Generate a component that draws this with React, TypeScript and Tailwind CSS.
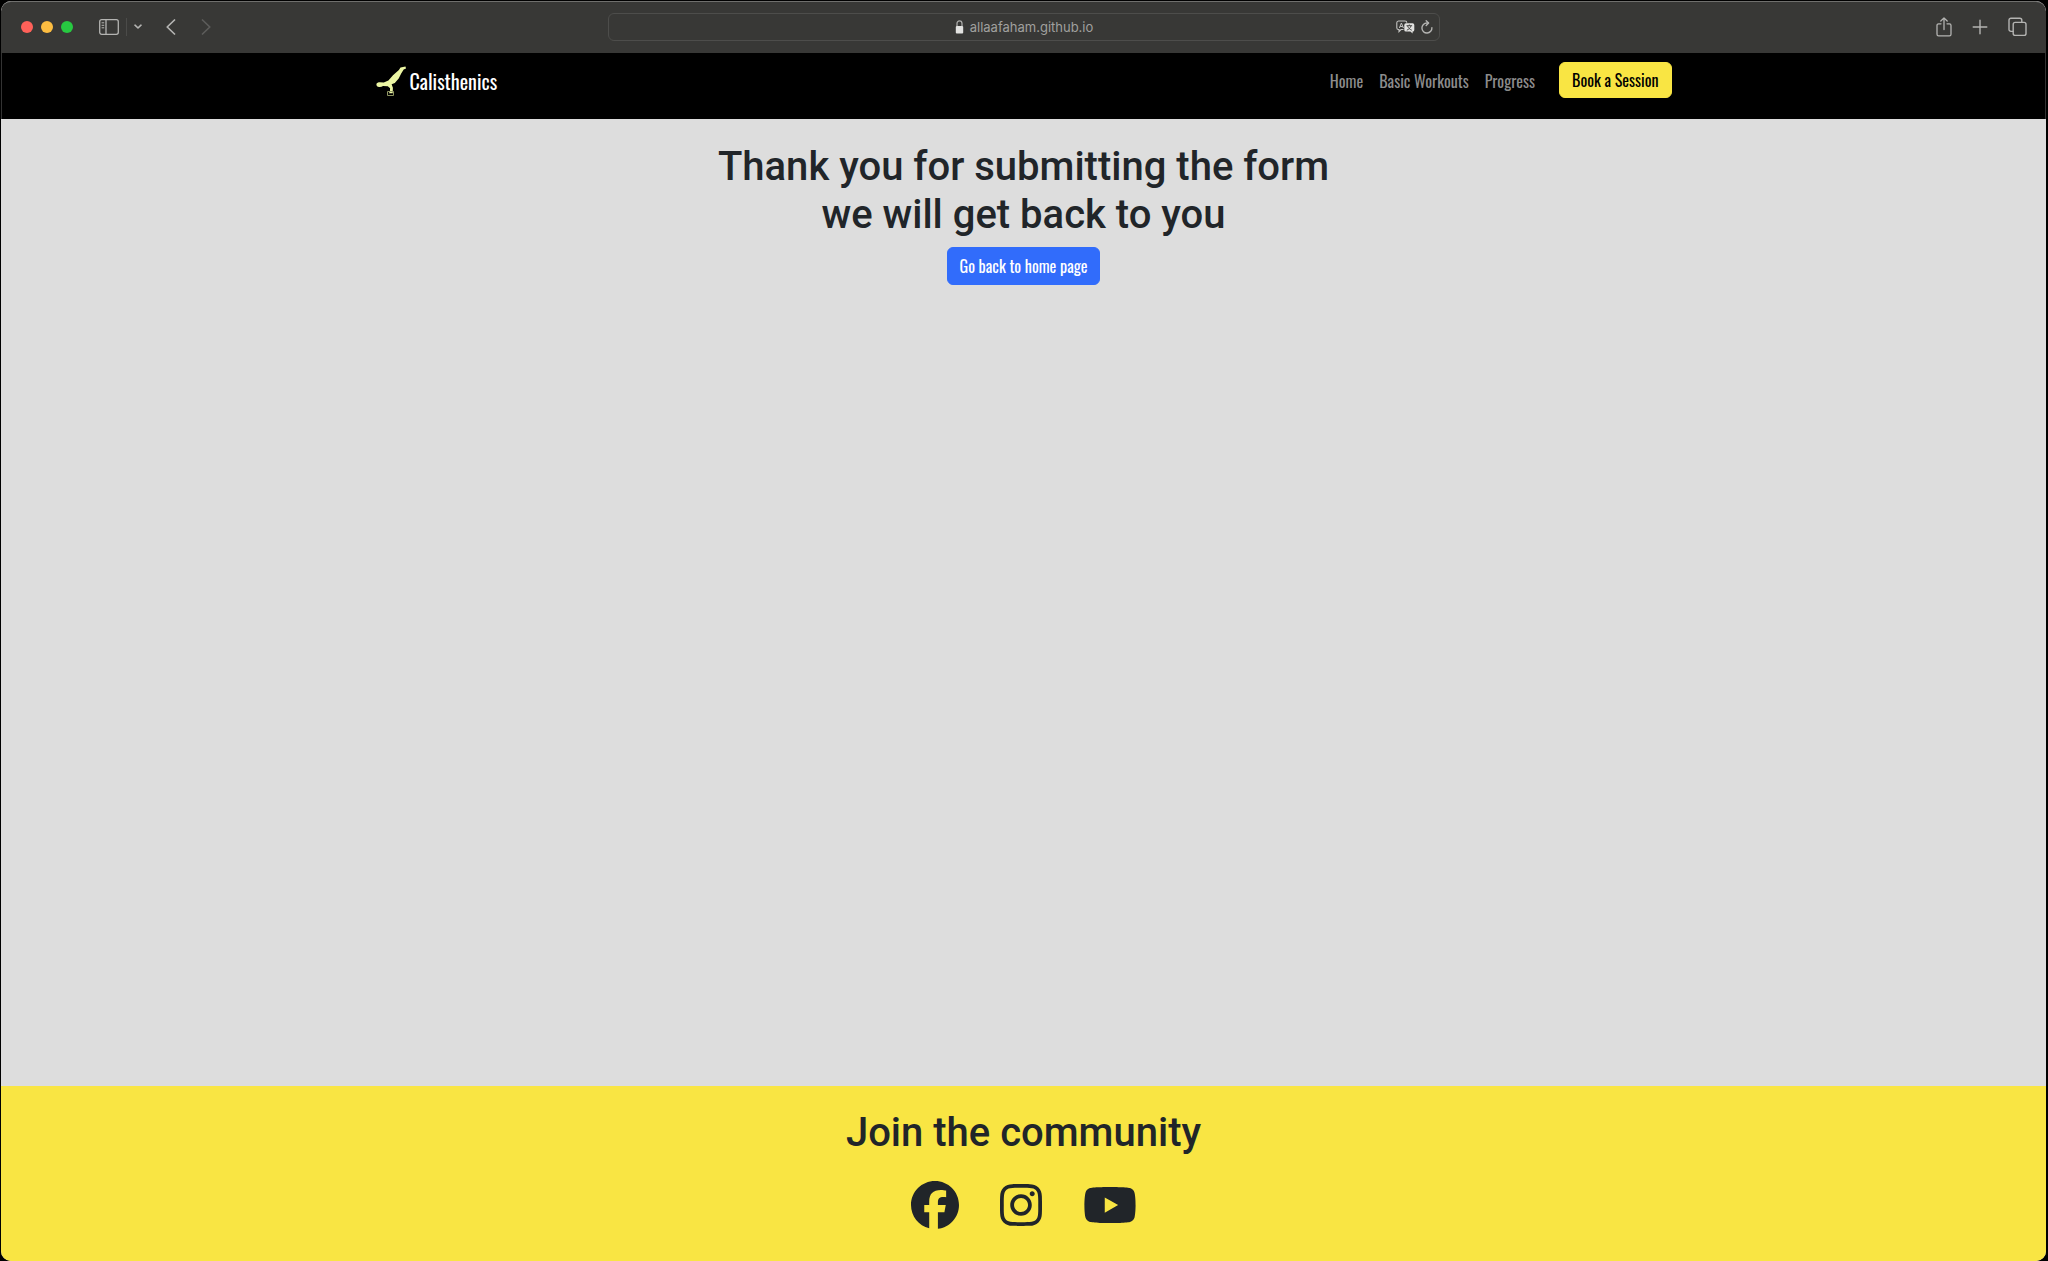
import React from "react";
import { FaFacebook, FaInstagram, FaYoutube } from "react-icons/fa6";

const navLinks = ["Home", "Basic Workouts", "Progress"];

const iconProps = {
  fill: "none",
  stroke: "currentColor",
  strokeLinecap: "round" as const,
  strokeLinejoin: "round" as const,
};

function Toolbar() {
  return (
    <div className="flex h-[52px] items-center rounded-t-[10px] border-t border-[#6f6f6d] bg-[#383836] pb-[2px] text-[#b4b4b2]">
      <div className="flex flex-1 items-center pl-[20px]">
        <div className="flex gap-2">
          <button aria-label="Close" className="size-3 rounded-full bg-[#ff6159]" />
          <button aria-label="Minimize" className="size-3 rounded-full bg-[#fdbd41]" />
          <button aria-label="Zoom" className="size-3 rounded-full bg-[#27c941]" />
        </div>
        <button aria-label="Show sidebar" className="ml-[26px]">
          <svg width="20" height="16" viewBox="0 0 20 16" {...iconProps} strokeWidth="1.3">
            <rect x="0.7" y="0.7" width="18.6" height="14.6" rx="2" />
            <path d="M7 1v14" />
            <path d="M3 3.8h1.8M3 6.3h1.8M3 8.8h1.8" strokeWidth="1" />
          </svg>
        </button>
        <span className="ml-[7px] h-[18px] w-px bg-[#4b4b49]" />
        <button aria-label="Tab groups" className="ml-[7px]">
          <svg width="8" height="6" viewBox="0 0 8 6" {...iconProps} strokeWidth="1.6">
            <path d="M1 1.2l3 2.8 3-2.8" />
          </svg>
        </button>
        <button aria-label="Back" className="ml-[24px]">
          <svg width="10" height="16" viewBox="0 0 10 16" {...iconProps} strokeWidth="1.7">
            <path d="M8.5 1L1.2 8l7.3 7" />
          </svg>
        </button>
        <button aria-label="Forward" className="ml-[25px] text-[#5c5c5a]">
          <svg width="10" height="16" viewBox="0 0 10 16" {...iconProps} strokeWidth="1.7">
            <path d="M1.5 1l7.3 7-7.3 7" />
          </svg>
        </button>
      </div>
      <div className="flex h-7 w-[832px] items-center rounded-md border border-[#4d4d4b] px-[6px]">
        <span className="flex-1" />
        <div className="flex items-center gap-[6px] text-[#a0a09e]">
          <svg width="9" height="14" viewBox="0 0 9 14" aria-hidden="true">
            <path d="M2 6V3.6a2.5 2.8 0 0 1 5 0V6" fill="none" stroke="#aaaaa8" strokeWidth="1.3" />
            <rect x="0.8" y="6" width="7.4" height="7.4" rx="1" fill="#e2e2e0" />
          </svg>
          <span className="font-[Inter,sans-serif] text-[13px] leading-4">allaafaham.github.io</span>
        </div>
        <div className="flex flex-1 items-center justify-end gap-[6px]">
          <button aria-label="Translate">
            <svg width="19" height="14" viewBox="0 0 19 14">
              <path
                d="M2.5 1h6.5a1.8 1.8 0 0 1 1.8 1.8M7.5 9.5H5L3 11.6V9.5H2.5A1.8 1.8 0 0 1 .8 7.7V2.8A1.8 1.8 0 0 1 2.5 1"
                fill="none"
                stroke="#c4c4c2"
                strokeWidth="1.1"
              />
              <path d="M3.4 8L5.4 3l2 5M4.1 6.5h2.6" fill="none" stroke="#c4c4c2" strokeWidth="1" />
              <path
                d="M10 3.2h6.6a1.7 1.7 0 0 1 1.7 1.7v5a1.7 1.7 0 0 1-1.7 1.7v2l-2.2-2H10a1.7 1.7 0 0 1-1.7-1.7v-5A1.7 1.7 0 0 1 10 3.2z"
                fill="#e2e2e0"
              />
              <path
                d="M10.5 5.7h5.6M13.3 4.5v1.2M15 5.9c-.7 2-2 3.4-4.2 4.3M11.6 5.9c.6 2 2 3.4 4.2 4.3"
                fill="none"
                stroke="#383836"
                strokeWidth="0.9"
              />
            </svg>
          </button>
          <button aria-label="Reload">
            <svg width="12" height="14" viewBox="0 0 12 14" {...iconProps} strokeWidth="1.4">
              <path d="M10.9 7.6A5 5 0 1 1 6 3h1.2" />
              <path d="M5.2.8l2.4 2.2-2.4 2.4" />
            </svg>
          </button>
        </div>
      </div>
      <div className="flex flex-1 items-center justify-end gap-[20px] pr-[19px]">
        <button aria-label="Share">
          <svg width="16" height="20" viewBox="0 0 16 20" {...iconProps} strokeWidth="1.3">
            <path d="M5 6.8H2.6A1.6 1.6 0 0 0 1 8.4v8.8a1.6 1.6 0 0 0 1.6 1.6h10.8a1.6 1.6 0 0 0 1.6-1.6V8.4a1.6 1.6 0 0 0-1.6-1.6H11" />
            <path d="M8 12.5V1M4.800 4L8 .9 11.200 4" />
          </svg>
        </button>
        <button aria-label="New tab">
          <svg width="16" height="16" viewBox="0 0 16 16" {...iconProps} strokeWidth="1.4">
            <path d="M8 1.200v13.600M1.200 8h13.600" />
          </svg>
        </button>
        <button aria-label="Tab overview">
          <svg width="19" height="20" viewBox="0 0 19 20" {...iconProps} strokeWidth="1.4">
            <rect x="5.2" y="5.4" width="12.8" height="13" rx="2" />
            <path d="M5 14.400H3a2 2 0 0 1-2-2V3.200a2 2 0 0 1 2-2h8.800a2 2 0 0 1 2 2v2" />
          </svg>
        </button>
      </div>
    </div>
  );
}

function Handstand() {
  return (
    <svg width="30" height="30" viewBox="0 0 30 30" fill="#ecf6a4" aria-hidden="true">
      <path d="M29.500.6l-5 .8-1.600 2.600-5.900 5.200-4.600 5.400-4.600 1.800-4-.2C2.400 16.200.6 16.800.4 18.200c-.2 1.600 1.100 2.600 2.700 2.800 1.600.2 2.900-.3 3.900-1.100l4.800.3 2.300 2-.2 3.500-1.200 1.500h4l.2-5.400-1.300-3.600 3.200-1.300 3.900-4.300 2.500-5 2.500-4.100 2.300-1z" />
      <path d="M11.500 25.500v4h6v-4h-6" fill="none" stroke="#8f9563" strokeWidth="1" />
    </svg>
  );
}

export default function App() {
  return (
    <div className="flex min-h-screen flex-col bg-black pt-px pr-[2px] pl-px font-['Oswald','Liberation_Sans_Narrow',sans-serif]">
      <div className="flex flex-1 flex-col overflow-hidden rounded-[10px] bg-[#dddddd] text-[#212529]">
        <Toolbar />
        <header className="border-x border-[#333333] bg-black">
          <nav className="mx-auto flex h-[66px] max-w-[1296px] items-start justify-between pt-[9px]">
            <a href="#" className="flex h-[38px] items-center gap-1 text-[20px] leading-[30px] text-white">
              <Handstand />
              Calisthenics
            </a>
            <div className="flex items-center text-[16px] leading-6">
              <div className="flex gap-4 pt-[2px] text-[#8c8c8c]">
                {navLinks.map((label) => (
                  <a key={label} href="#">
                    {label}
                  </a>
                ))}
              </div>
              <button className="ml-6 h-[36px] rounded-md border border-[#f9e543] bg-[#f9e543] px-3 text-black">
                Book a Session
              </button>
            </div>
          </nav>
        </header>
        <main className="flex flex-1 flex-col items-center pt-6">
          <h1 className="text-center font-[Roboto,sans-serif] text-[40px] leading-[48px] font-medium">
            Thank you for submitting the form
            <br />
            we will get back to you
          </h1>
          <a
            href="#"
            className="mt-2 rounded-md border border-[#316cfb] bg-[#316cfb] px-3 py-1.5 text-[16px] leading-6 text-white"
          >
            Go back to home page
          </a>
        </main>
        <footer className="flex flex-col items-center bg-[#f9e543] pt-[23px] pb-8">
          <h2 className="font-[Roboto,sans-serif] text-[40px] leading-[48px] font-medium">Join the community</h2>
          <div className="mt-6 flex gap-[41px]">
            <a href="#" aria-label="Facebook">
              <FaFacebook className="h-12 w-12" />
            </a>
            <a href="#" aria-label="Instagram">
              <FaInstagram className="h-12 w-[42px]" />
            </a>
            <a href="#" aria-label="YouTube">
              <FaYoutube className="h-12 w-[54px]" />
            </a>
          </div>
        </footer>
      </div>
    </div>
  );
}
